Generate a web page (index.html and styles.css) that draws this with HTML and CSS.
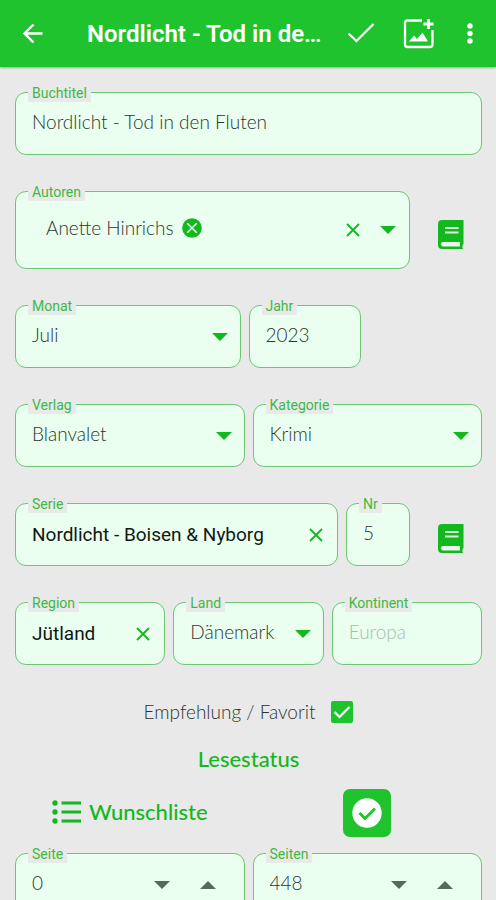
FILE: index.html
```html
<!DOCTYPE html>
<html lang="de">
<head>
<meta charset="utf-8">
<meta name="viewport" content="width=device-width, initial-scale=1">
<title>Nordlicht - Tod in den Fluten</title>
<link rel="stylesheet" href="styles.css">
</head>
<body>
<header class="bar">
  <button class="bar-btn" type="button" aria-label="Zurück">
    <svg width="22" height="22" viewBox="0 0 22 22" fill="none" stroke="currentColor" stroke-width="2.4"><path d="M20.500 10.500H2.500M11.500 1.500L2.500 10.500l9 9"/></svg>
  </button>
  <h1 class="bar-title">Nordlicht - Tod in den Fluten</h1>
  <button class="bar-btn" type="button" aria-label="Speichern">
    <svg width="28" height="22" viewBox="0 0 28 22" fill="none" stroke="currentColor" stroke-width="2.300"><path d="M1.500 10.500l8 7.500L26.500 1"/></svg>
  </button>
  <button class="bar-btn" type="button" aria-label="Bild hinzufügen">
    <svg width="32" height="32" viewBox="0 0 32 32"><path d="M19 2.500H4.500A2.500 2.500 0 0 0 2 5v21.500A2.500 2.500 0 0 0 4.500 29h22.500a2.500 2.500 0 0 0 2.500-2.500V12" fill="none" stroke="currentColor" stroke-width="2.300"/><path d="M25.500 1v10M20.500 6h10" stroke="currentColor" stroke-width="3"/><path d="M6 23.500l5-6 3 3.500 5.500-6.500L25 23.500z" fill="currentColor"/></svg>
  </button>
  <button class="bar-btn bar-more" type="button" aria-label="Mehr">
    <svg width="6" height="22" viewBox="0 0 6 22" fill="currentColor"><circle cx="3" cy="3" r="2.700"/><circle cx="3" cy="10.500" r="2.700"/><circle cx="3" cy="18" r="2.700"/></svg>
  </button>
</header>

<main class="form">
  <div class="field">
    <label class="field-label" for="titel">Buchtitel</label>
    <input class="value" id="titel" type="text" value="Nordlicht - Tod in den Fluten">
  </div>

  <div class="row row-authors">
    <div class="field field-tall">
      <label class="field-label" for="autoren">Autoren</label>
      <span class="chip">Anette Hinrichs
        <button class="icon-btn" type="button" aria-label="Anette Hinrichs entfernen">
          <svg width="20" height="20" viewBox="0 0 20 20"><circle cx="10" cy="10" r="9.800" fill="currentColor"/><path d="M5.200 5.200l9.600 9.600M14.800 5.200l-9.600 9.600" stroke="#eaffef" stroke-width="1.500"/></svg>
        </button>
      </span>
      <input class="value" id="autoren" type="text">
      <button class="icon-btn clear" type="button" aria-label="Autoren leeren">
        <svg width="14" height="14" viewBox="0 0 14 14"><path d="M1 1l12 12M13 1L1 13" stroke="currentColor" stroke-width="1.800"/></svg>
      </button>
      <button class="icon-btn" type="button" aria-label="Autoren auswählen">
        <svg width="16" height="8" viewBox="0 0 16 8"><path d="M0 0h16L8 8z" fill="currentColor"/></svg>
      </button>
    </div>
    <button class="icon-btn book" type="button" aria-label="Autorenliste">
      <svg width="26" height="30" viewBox="0 0 26 30"><path d="M4 0h21.500v24l-1 1v3l1 1H4a4 4 0 0 1-4-4V4a4 4 0 0 1 4-4z" fill="currentColor"/><path d="M7 8h13.500M7 12.500h13.500" stroke="#d9f2dc" stroke-width="1.800"/><path d="M5.200 22H22v4.500H5.200a2.250 2.250 0 0 1 0-4.500z" fill="#eaf5eb"/></svg>
    </button>
  </div>

  <div class="row row-date">
    <div class="field">
      <label class="field-label" for="monat">Monat</label>
      <select class="value" id="monat"><option>Juli</option></select>
      <svg class="caret" width="16" height="8" viewBox="0 0 16 8"><path d="M0 0h16L8 8z" fill="currentColor"/></svg>
    </div>
    <div class="field">
      <label class="field-label" for="jahr">Jahr</label>
      <input class="value" id="jahr" type="text" value="2023">
    </div>
  </div>

  <div class="row row-half">
    <div class="field">
      <label class="field-label" for="verlag">Verlag</label>
      <select class="value" id="verlag"><option>Blanvalet</option></select>
      <svg class="caret" width="16" height="8" viewBox="0 0 16 8"><path d="M0 0h16L8 8z" fill="currentColor"/></svg>
    </div>
    <div class="field">
      <label class="field-label" for="kategorie">Kategorie</label>
      <select class="value" id="kategorie"><option>Krimi</option></select>
      <svg class="caret" width="16" height="8" viewBox="0 0 16 8"><path d="M0 0h16L8 8z" fill="currentColor"/></svg>
    </div>
  </div>

  <div class="row row-series">
    <div class="field">
      <label class="field-label" for="serie">Serie</label>
      <input class="value value-plain" id="serie" type="text" value="Nordlicht - Boisen &amp; Nyborg">
      <button class="icon-btn" type="button" aria-label="Serie leeren">
        <svg width="14" height="14" viewBox="0 0 14 14"><path d="M1 1l12 12M13 1L1 13" stroke="currentColor" stroke-width="1.800"/></svg>
      </button>
    </div>
    <div class="field">
      <label class="field-label" for="nr">Nr</label>
      <input class="value" id="nr" type="text" value="5">
    </div>
    <button class="icon-btn book" type="button" aria-label="Serienliste">
      <svg width="26" height="30" viewBox="0 0 26 30"><path d="M4 0h21.500v24l-1 1v3l1 1H4a4 4 0 0 1-4-4V4a4 4 0 0 1 4-4z" fill="currentColor"/><path d="M7 8h13.500M7 12.500h13.500" stroke="#d9f2dc" stroke-width="1.800"/><path d="M5.200 22H22v4.500H5.200a2.250 2.250 0 0 1 0-4.500z" fill="#eaf5eb"/></svg>
    </button>
  </div>

  <div class="row row-third">
    <div class="field">
      <label class="field-label" for="region">Region</label>
      <input class="value value-plain" id="region" type="text" value="Jütland">
      <button class="icon-btn" type="button" aria-label="Region leeren">
        <svg width="14" height="14" viewBox="0 0 14 14"><path d="M1 1l12 12M13 1L1 13" stroke="currentColor" stroke-width="1.800"/></svg>
      </button>
    </div>
    <div class="field">
      <label class="field-label" for="land">Land</label>
      <select class="value" id="land"><option>Dänemark</option></select>
      <svg class="caret" width="16" height="8" viewBox="0 0 16 8"><path d="M0 0h16L8 8z" fill="currentColor"/></svg>
    </div>
    <div class="field">
      <label class="field-label" for="kontinent">Kontinent</label>
      <input class="value" id="kontinent" type="text" placeholder="Europa">
    </div>
  </div>

  <section class="status">
    <label class="favorite">Empfehlung / Favorit
      <span class="tick">
        <input type="checkbox" checked>
        <svg width="22" height="22" viewBox="0 0 22 22" fill="none" stroke="#fff" stroke-width="2.200"><path d="M3.500 11l5 5L18.500 6"/></svg>
      </span>
    </label>
    <h2 class="status-title">Lesestatus</h2>
    <div class="row row-half status-row">
      <button class="wish" type="button">
        <svg width="30" height="24" viewBox="0 0 30 24"><g fill="currentColor"><circle cx="3" cy="3" r="2.700"/><circle cx="3" cy="12" r="2.700"/><circle cx="3" cy="21" r="2.700"/></g><path d="M9.500 3H29M9.500 12H29M9.500 21H29" stroke="currentColor" stroke-width="3"/></svg>
        Wunschliste
      </button>
      <button class="done" type="button" aria-label="Gelesen">
        <svg width="30" height="30" viewBox="0 0 30 30"><circle cx="15" cy="15" r="14.700" fill="#fff"/><path d="M7.500 15l5.500 5.500L23 10.500" fill="none" stroke="currentColor" stroke-width="2.800"/></svg>
      </button>
    </div>
    <div class="row row-half">
      <div class="field">
        <label class="field-label" for="seite">Seite</label>
        <input class="value" id="seite" type="text" inputmode="numeric" value="0">
        <div class="stepper">
          <button class="icon-btn" type="button" aria-label="Seite verringern"><svg width="16" height="8" viewBox="0 0 16 8"><path d="M0 0h16L8 8z" fill="currentColor"/></svg></button>
          <button class="icon-btn" type="button" aria-label="Seite erhöhen"><svg width="16" height="8" viewBox="0 0 16 8"><path d="M0 8h16L8 0z" fill="currentColor"/></svg></button>
        </div>
      </div>
      <div class="field">
        <label class="field-label" for="seiten">Seiten</label>
        <input class="value" id="seiten" type="text" inputmode="numeric" value="448">
        <div class="stepper">
          <button class="icon-btn" type="button" aria-label="Seiten verringern"><svg width="16" height="8" viewBox="0 0 16 8"><path d="M0 0h16L8 8z" fill="currentColor"/></svg></button>
          <button class="icon-btn" type="button" aria-label="Seiten erhöhen"><svg width="16" height="8" viewBox="0 0 16 8"><path d="M0 8h16L8 0z" fill="currentColor"/></svg></button>
        </div>
      </div>
    </div>
  </section>
</main>
</body>
</html>
```
FILE: styles.css
```css
:root {
  --green: #1fc32d;
  --ink-green: #13b81e;
  --line: #6cc774;
  --page: #e9e9e9;
  --fill: #eaffef;
}

* {
  box-sizing: border-box;
}

body {
  margin: 0;
  height: 100vh;
  display: flex;
  flex-direction: column;
  background: var(--page);
  color: #2c352e;
  font-family: Lato, "Liberation Sans", sans-serif;
  font-size: 19px;
  font-weight: 300;
}

button,
input,
select {
  font: inherit;
  color: inherit;
  margin: 0;
  padding: 0;
  border: 0;
  background: none;
}

svg {
  display: block;
  flex: none;
}

.bar {
  flex: none;
  display: flex;
  align-items: center;
  gap: 10px;
  height: 67px;
  padding: 0 9px;
  background: var(--green);
  color: #fff;
  box-shadow: 0 1px 2px #8fb592;
}

.bar-btn {
  flex: none;
  width: 48px;
  height: 48px;
  display: grid;
  place-items: center;
}

.bar-more {
  width: 34px;
}

.bar-title {
  flex: 1;
  min-width: 0;
  margin: 0 0 0 20px;
  overflow: hidden;
  white-space: nowrap;
  text-overflow: ellipsis;
  font-family: Roboto, "Liberation Sans", sans-serif;
  font-size: 24px;
  line-height: 32px;
  font-weight: 600;
}

.form {
  flex: 1;
  min-height: 0;
  overflow-y: auto;
  scrollbar-width: none;
  display: flex;
  flex-direction: column;
  gap: 36px;
  padding: 25px 14px 25px 15px;
}

.form > * {
  flex: none;
}

.row {
  display: grid;
  gap: 8px;
}

.row-authors {
  grid-template-columns: minmax(0, 1fr) 64px;
}

.row-date {
  grid-template-columns: 2fr 1fr 1fr;
}

.row-half {
  grid-template-columns: 1fr 1fr;
}

.row-series {
  grid-template-columns: minmax(0, 1fr) 64px 64px;
}

.row-third {
  grid-template-columns: 1fr 1fr 1fr;
}

.field {
  position: relative;
  display: flex;
  align-items: center;
  min-width: 0;
  height: 63px;
  padding: 0 14px 0 16px;
  border: 1px solid var(--line);
  border-radius: 11px;
  background: var(--fill);
}

.field-tall {
  height: 78px;
}

.field-label {
  position: absolute;
  top: -8px;
  left: 12px;
  padding: 0 4px;
  background: var(--page);
  color: #3cba45;
  font-family: Roboto, "Liberation Sans", sans-serif;
  font-size: 14px;
  line-height: 17px;
  font-weight: 400;
}

.value {
  flex: 1;
  min-width: 0;
  width: 0;
  height: 40px;
  padding-bottom: 5px;
  outline: 0;
  appearance: none;
}

.value::placeholder {
  color: #a9bcac;
  opacity: 1;
}

.value-plain {
  padding-bottom: 0;
  color: #101811;
  font-family: Roboto, "Liberation Sans", sans-serif;
  font-weight: 400;
}

.caret {
  color: var(--ink-green);
  pointer-events: none;
  margin-right: -2px;
}

.icon-btn {
  flex: none;
  color: var(--ink-green);
}

.chip {
  display: flex;
  align-items: center;
  gap: 8px;
  padding: 0 0 5px 14px;
}

.clear {
  margin-right: 20px;
}

.field-tall > .icon-btn:last-child {
  margin-right: -1px;
}

.book {
  justify-self: end;
  align-self: center;
  padding: 9px 18px 0;
}

.status {
  display: flex;
  flex-direction: column;
  gap: 16px;
}

.favorite {
  display: flex;
  align-items: center;
  justify-content: center;
  gap: 16px;
  padding-bottom: 6px;
  line-height: 22px;
}

.tick {
  display: grid;
}

.tick > * {
  grid-area: 1 / 1;
  pointer-events: none;
}

.tick input {
  width: 22px;
  height: 22px;
  appearance: none;
  border-radius: 2px;
  background: var(--green);
}

.status-title {
  margin: 0;
  color: var(--ink-green);
  font-size: 22px;
  line-height: 28px;
  font-weight: 500;
  text-align: center;
}

.status-row {
  align-items: center;
  justify-items: center;
}

.wish {
  display: flex;
  align-items: center;
  gap: 7px;
  padding-bottom: 3px;
  color: var(--ink-green);
  font-size: 22px;
  font-weight: 500;
}

.done {
  display: grid;
  place-items: center;
  width: 48px;
  height: 48px;
  border-radius: 7px;
  background: var(--green);
  color: var(--green);
}

.stepper {
  display: flex;
  gap: 30px;
  padding-right: 14px;
}

.stepper .icon-btn {
  color: #56695a;
}
```
